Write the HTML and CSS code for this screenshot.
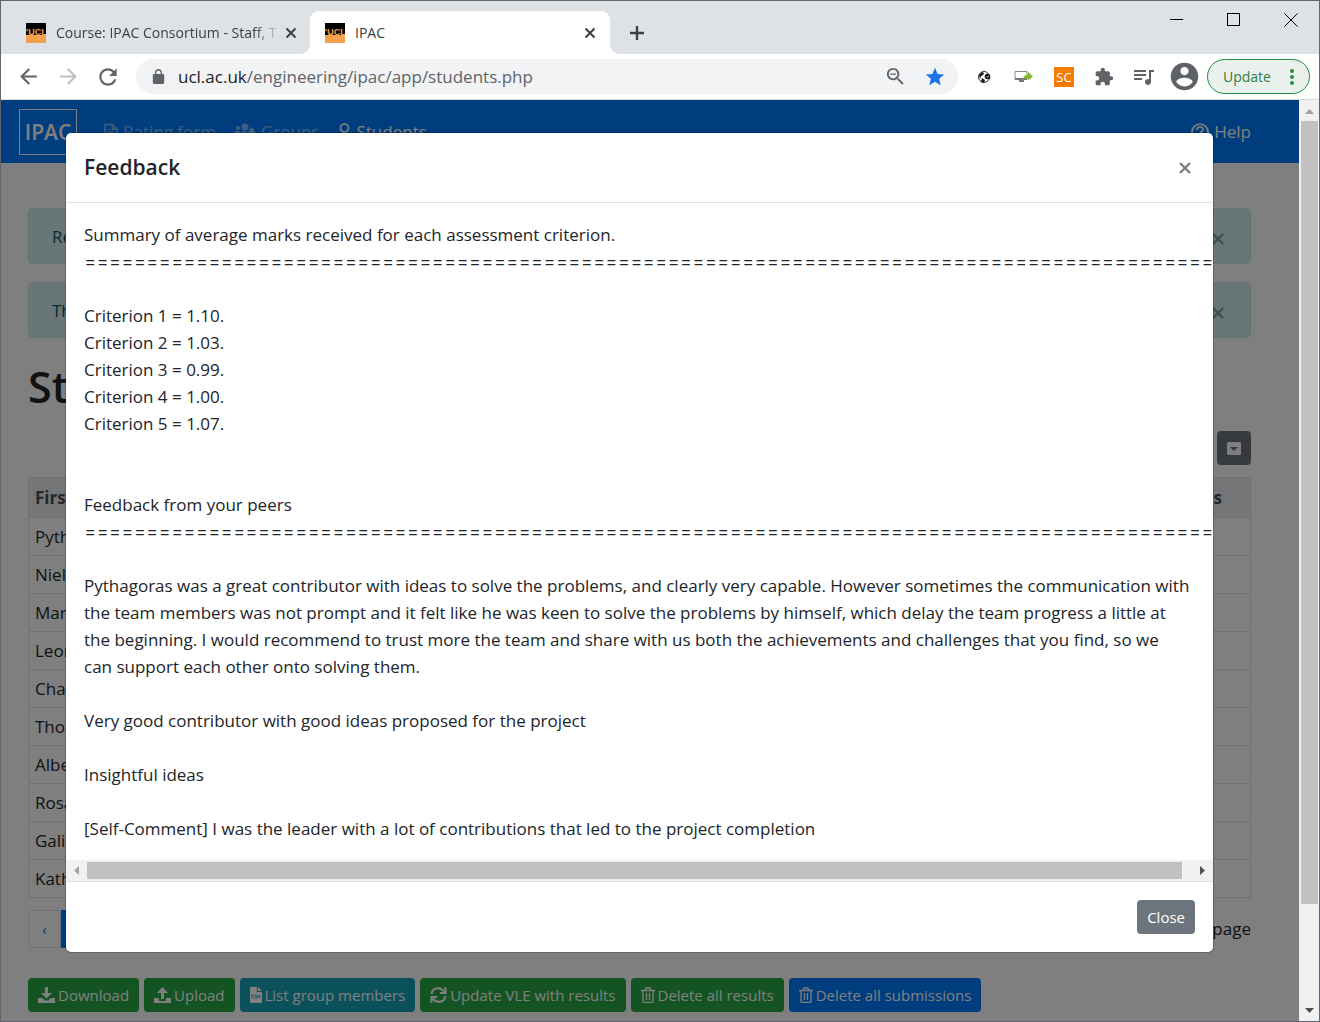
FILE: index.html
```html
<!DOCTYPE html>
<html lang="en">
<head>
	<meta charset="utf-8">
	<title>IPAC</title>
	<link rel="stylesheet" href="styles.css">
</head>
<body>
<div class="window">

	<header class="tabstrip">
		<div class="tab">
			<svg class="favicon" viewBox="0 0 20 20"><rect width="20" height="20" fill="#000"/><rect y="12" width="20" height="8" fill="#f3a14c"/><text x="0" y="12" class="favtext">'UCL</text></svg>
			<span class="tabtitle fade">Course: IPAC Consortium - Staff, T</span>
			<button class="tabclose" aria-label="Close tab"><svg width="12" height="12" viewBox="0 0 12 12"><path d="M1.500 1.500l9 9M10.500 1.500l-9 9" stroke="#3c4043" stroke-width="2"/></svg></button>
		</div>
		<div class="tab active">
			<svg class="favicon" viewBox="0 0 20 20"><rect width="20" height="20" fill="#000"/><rect y="12" width="20" height="8" fill="#f3a14c"/><text x="0" y="12" class="favtext">'UCL</text></svg>
			<span class="tabtitle">IPAC</span>
			<button class="tabclose" aria-label="Close tab"><svg width="12" height="12" viewBox="0 0 12 12"><path d="M1.500 1.500l9 9M10.500 1.500l-9 9" stroke="#3c4043" stroke-width="2"/></svg></button>
		</div>
		<button class="newtab" aria-label="New tab"><svg width="16" height="16" viewBox="0 0 16 16"><path d="M8 1v14M1 8h14" stroke="#3c4043" stroke-width="2.400"/></svg></button>
		<div class="winbuttons">
			<button aria-label="Minimise"><svg width="14" height="14"><path d="M0 6.500h13" stroke="#000"/></svg></button>
			<button aria-label="Maximise"><svg width="14" height="14"><rect x=".5" y=".5" width="12" height="12" fill="none" stroke="#000"/></svg></button>
			<button aria-label="Close window"><svg width="14" height="14"><path d="M.5 .5l13 13M13.500 .5l-13 13" stroke="#000"/></svg></button>
		</div>
	</header>

	<div class="toolbar">
		<button class="tool" aria-label="Back"><svg width="25" height="25" viewBox="0 0 24 24"><path fill="#5f6368" d="M20 11H7.830l5.590-5.590L12 4l-8 8 8 8 1.410-1.410L7.830 13H20v-2z"/></svg></button>
		<button class="tool" aria-label="Forward"><svg width="25" height="25" viewBox="0 0 24 24"><path fill="#bdc1c6" d="M4 11h12.170l-5.590-5.590L12 4l8 8-8 8-1.410-1.410L16.170 13H4v-2z"/></svg></button>
		<button class="tool" aria-label="Reload"><svg width="26" height="26" viewBox="0 0 24 24"><path fill="#5f6368" d="M17.650 6.350C16.200 4.900 14.210 4 12 4c-4.420 0-7.990 3.580-7.990 8s3.570 8 7.990 8c3.730 0 6.840-2.550 7.730-6h-2.080c-.82 2.330-3.040 4-5.650 4-3.310 0-6-2.690-6-6s2.690-6 6-6c1.660 0 3.140.69 4.220 1.780L13 11h7V4l-2.350 2.350z"/></svg></button>
		<div class="omnibox">
			<svg width="15" height="15" viewBox="3 1 18 21"><path fill="#5f6368" d="M18 8h-1V6c0-2.760-2.240-5-5-5S7 3.240 7 6v2H6c-1.100 0-2 .9-2 2v10c0 1.100.9 2 2 2h12c1.100 0 2-.9 2-2V10c0-1.100-.9-2-2-2zM9 6c0-1.660 1.340-3 3-3s3 1.340 3 3v2H9V6z"/></svg>
			<label class="host" for="url">ucl.ac.uk</label>
			<input id="url" type="text" value="/engineering/ipac/app/students.php">
			<button class="tool" aria-label="Zoom"><svg width="23" height="23" viewBox="0 0 24 24"><path fill="#5f6368" d="M15.500 14h-.79l-.28-.27C15.410 12.590 16 11.110 16 9.500 16 5.910 13.090 3 9.500 3S3 5.910 3 9.500 5.910 16 9.500 16c1.610 0 3.090-.59 4.230-1.570l.27.28v.79l5 4.990L20.490 19l-4.990-5zm-6 0C7.010 14 5 11.990 5 9.500S7.010 5 9.500 5 14 7.010 14 9.500 11.990 14 9.500 14zM6.500 8.800h6v1.400h-6z"/></svg></button>
			<button class="tool" aria-label="Bookmark"><svg width="22" height="22" viewBox="0 0 24 24"><path fill="#1a73e8" d="M12 17.270L18.180 21l-1.640-7.030L22 9.240l-7.190-.61L12 2 9.190 8.630 2 9.240l5.460 4.730L5.820 21z"/></svg></button>
		</div>
		<div class="extensions">
			<button class="tool" aria-label="Cookies"><svg width="14" height="14" viewBox="0 0 14 14"><circle cx="7" cy="7" r="5.500" fill="#fff" stroke="#333"/><path d="M2 5l3-3 2 1-1 2-2 1-1 3zM5 8l3 2-1 3-3-1z" fill="#111"/><circle cx="10.500" cy="6.500" r="2.800" fill="#111"/><path d="M9.500 6.500l1 1 1.500-2" fill="none" stroke="#fff" stroke-width=".8"/></svg></button>
			<button class="tool" aria-label="Share screen"><svg width="20" height="16" viewBox="0 0 20 16"><path d="M1 2.500h12v8H1z" fill="#fff" stroke="#888"/><path d="M1 9h12v2H1zM5 11h5v2H5z" fill="#777"/><path d="M9 12c0-5 2-6 5-6V3l5 4.500-5 4V9c-2 0-4 0-5 3z" fill="#7dbb2a"/></svg></button>
			<button class="tool" aria-label="SC"><span class="sc">SC</span></button>
			<button class="tool" aria-label="Extensions"><svg width="20" height="20" viewBox="0 0 24 24"><path fill="#5f6368" d="M20.500 11H19V7c0-1.100-.9-2-2-2h-4V3.500C13 2.120 11.880 1 10.500 1S8 2.120 8 3.500V5H4c-1.100 0-1.990.9-1.990 2v3.800H3.500c1.490 0 2.700 1.210 2.700 2.700s-1.210 2.700-2.700 2.700H2V20c0 1.100.9 2 2 2h3.800v-1.500c0-1.490 1.210-2.700 2.700-2.700 1.490 0 2.700 1.210 2.700 2.700V22H17c1.100 0 2-.9 2-2v-4h1.500c1.380 0 2.500-1.120 2.500-2.500S21.880 11 20.500 11z"/></svg></button>
			<button class="tool" aria-label="Media"><svg width="24" height="24" viewBox="0 0 24 24"><path fill="#5f6368" d="M14 5H2v2h12V5zm0 4H2v2h12V9zM2 15h8v-2H2v2zM17 5v9.180c-.31-.11-.65-.18-1-.18-1.660 0-3 1.340-3 3s1.340 3 3 3 3-1.340 3-3V7h3V5h-5z"/></svg></button>
			<button class="tool" aria-label="Profile"><svg width="33" height="33" viewBox="0 0 24 24"><path fill="#5f6368" d="M12 2C6.480 2 2 6.480 2 12s4.480 10 10 10 10-4.480 10-10S17.520 2 12 2zm0 3c1.660 0 3 1.340 3 3s-1.340 3-3 3-3-1.340-3-3 1.340-3 3-3zm0 14.200c-2.500 0-4.710-1.280-6-3.220.03-1.990 4-3.080 6-3.080 1.990 0 5.970 1.090 6 3.080-1.290 1.940-3.500 3.220-6 3.220z"/></svg></button>
		</div>
		<button class="update">Update <svg width="4" height="16" viewBox="0 0 4 16"><g fill="#1e8e3e"><circle cx="2" cy="2" r="2"/><circle cx="2" cy="8" r="2"/><circle cx="2" cy="14" r="2"/></g></svg></button>
	</div>

	<div class="viewport">
		<div class="page">
			<nav class="navbar">
				<a class="brand" href="#">IPAC</a>
				<a class="navlink" href="#"><svg width="14" height="18" viewBox="0 0 15 18" fill="none" stroke="currentColor" stroke-width="1.500"><path d="M1 1h8l5 5v11H1zM9 1v5h5M4 9.500h7M4 12.500h7M4 6.500h2"/></svg>Rating form</a>
				<a class="navlink" href="#"><svg width="21" height="18" viewBox="0 0 21 18" fill="currentColor"><circle cx="3" cy="5" r="2"/><circle cx="10" cy="4" r="3.500"/><circle cx="17" cy="6" r="1.500"/><path d="M0 8h5l-2 4H0zM4 15c0-5 2-7 6-7l3 3v4zM12 9l2-1 1-2h3l1 2 2 1-1 3 1 2-3 1-1 2h-2l-2-3z"/></svg>Groups</a>
				<a class="navlink current" href="#"><svg width="13" height="18" viewBox="0 0 12 18" fill="none" stroke="currentColor" stroke-width="1.700"><circle cx="6" cy="5" r="4"/><path d="M1 17v-3c0-4 10-4 10 0v3z"/></svg>Students</a>
				<a class="navlink current help" href="#"><svg width="18" height="18" viewBox="0 0 18 18" fill="none" stroke="currentColor" stroke-width="1.700"><circle cx="9" cy="9" r="8"/><path d="M6 7c0-4 6-4 6-.5C12 9 9 8.500 9 11M9 12.500v2"/></svg>Help</a>
			</nav>

			<main class="content">
				<div class="alert"><span>Results</span><button aria-label="Dismiss"><svg width="12" height="12" viewBox="0 0 12 12"><path d="M1 1l10 10M11 1L1 11" stroke="currentColor" stroke-width="2.200"/></svg></button></div>
				<div class="alert"><span>The</span><button aria-label="Dismiss"><svg width="12" height="12" viewBox="0 0 12 12"><path d="M1 1l10 10M11 1L1 11" stroke="currentColor" stroke-width="2.200"/></svg></button></div>

				<h1>Students</h1>

				<div class="tabletools">
					<button class="btn secondary" aria-label="Columns"><svg width="14" height="13" viewBox="0 0 14 13"><rect width="14" height="13" rx="1.500" fill="currentColor"/><path d="M3 5h8l-4 4z" fill="#6c757d"/></svg></button>
				</div>

				<table>
					<thead>
						<tr><th>First name</th><th class="last">Actions</th></tr>
					</thead>
					<tbody>
						<tr><td>Pythagoras</td><td></td></tr>
						<tr><td>Niels</td><td></td></tr>
						<tr><td>Marie</td><td></td></tr>
						<tr><td>Leonardo</td><td></td></tr>
						<tr><td>Charles</td><td></td></tr>
						<tr><td>Thomas</td><td></td></tr>
						<tr><td>Albert</td><td></td></tr>
						<tr><td>Rosalind</td><td></td></tr>
						<tr><td>Galileo</td><td></td></tr>
						<tr><td>Katherine</td><td></td></tr>
					</tbody>
				</table>

				<div class="paging">
					<div class="pages"><a href="#">‹</a><a class="on" href="#">1</a></div>
					<span>rows per page</span>
				</div>

				<div class="actions">
					<button class="btn success"><svg width="17" height="16" viewBox="0 0 17 16"><path fill="currentColor" d="M7 0h3v6h4l-5.500 5.500L3 6h4zM0 11h4l3 2.500h3l3-2.500h4v5H0z"/></svg>Download</button>
					<button class="btn success"><svg width="17" height="16" viewBox="0 0 17 16"><path fill="currentColor" d="M7 12V6H3l5.500-6L14 6h-4v6zM0 11h5v3h7v-3h5v5H0z"/></svg>Upload</button>
					<button class="btn info"><svg width="12" height="16" viewBox="0 0 12 16"><path fill="currentColor" d="M0 0h7v5h5v11H0zM8 0l4 4H8z"/><path d="M4 8H2v3h2M7 8H5.500v1.500H7V11H5M8 8l1 3 1-3" fill="none" stroke="#17a2b8" stroke-width=".8"/></svg>List group members</button>
					<button class="btn success"><svg width="17" height="16" viewBox="0 0 17 16" fill="none" stroke="currentColor" stroke-width="2"><path d="M1.500 7C2.500 0 11 -.5 14 4.500M15.500 0v6H10M15.500 9C14.500 16 6 16.500 3 11.500M1.500 16v-6H7"/></svg>Update VLE with results</button>
					<button class="btn success"><svg width="14" height="16" viewBox="0 0 14 16" fill="none" stroke="currentColor" stroke-width="1.300"><path d="M0 3.500h14M4 3.500L5 1h4l1 2.500M2 3.500v11q0 .8.800.8h8.400q.8 0 .8-.8v-11M5.500 6v7M8.500 6v7"/></svg>Delete all results</button>
					<button class="btn primary"><svg width="14" height="16" viewBox="0 0 14 16" fill="none" stroke="currentColor" stroke-width="1.300"><path d="M0 3.500h14M4 3.500L5 1h4l1 2.500M2 3.500v11q0 .8.800.8h8.400q.8 0 .8-.8v-11M5.500 6v7M8.500 6v7"/></svg>Delete all submissions</button>
				</div>
			</main>

			<div class="backdrop"></div>

			<div class="modal" role="dialog" aria-labelledby="modaltitle">
				<div class="modal-header">
					<h2 id="modaltitle">Feedback</h2>
					<button aria-label="Close feedback"><svg width="14" height="14" viewBox="0 0 14 14"><path d="M2 2l10 10M12 2L2 12" stroke="#7f7f7f" stroke-width="2.400"/></svg></button>
				</div>
				<div class="modal-body">
					Summary of average marks received for each assessment criterion.<br>
					<span class="rule">===========================================================================================</span><br>
					<br>
					Criterion 1 = 1.10.<br>
					Criterion 2 = 1.03.<br>
					Criterion 3 = 0.99.<br>
					Criterion 4 = 1.00.<br>
					Criterion 5 = 1.07.<br>
					<br>
					<br>
					Feedback from your peers<br>
					<span class="rule">===========================================================================================</span><br>
					<br>
					Pythagoras was a great contributor with ideas to solve the problems, and clearly very capable. However sometimes the communication with<br>
					the team members was not prompt and it felt like he was keen to solve the problems by himself, which delay the team progress a little at<br>
					the beginning. I would recommend to trust more the team and share with us both the achievements and challenges that you find, so we<br>
					can support each other onto solving them.<br>
					<br>
					Very good contributor with good ideas proposed for the project<br>
					<br>
					Insightful ideas<br>
					<br>
					[Self-Comment] I was the leader with a lot of contributions that led to the project completion
				</div>
				<div class="hscroll">
					<svg width="21" height="21" viewBox="0 0 21 21"><path d="M13 6v9l-5-4.500z" fill="#a3a3a3"/></svg>
					<div class="thumb"></div>
					<svg width="21" height="21" viewBox="0 0 21 21"><path d="M8 6v9l5-4.500z" fill="#505050"/></svg>
				</div>
				<div class="modal-footer">
					<button class="btn secondary">Close</button>
				</div>
			</div>
		</div>

		<div class="vscroll">
			<svg width="20" height="21" viewBox="0 0 20 21"><path d="M6 14h9l-4.500-5z" fill="#a3a3a3"/></svg>
			<div class="thumb"></div>
			<svg width="20" height="21" viewBox="0 0 20 21"><path d="M6 8h9l-4.500 5z" fill="#505050"/></svg>
		</div>
	</div>
</div>
</body>
</html>
```
FILE: styles.css
```css
* {
	box-sizing: border-box;
}
body {
	margin: 0;
	font-family: "Open Sans", "Noto Sans", sans-serif;
	font-size: 17px;
	line-height: 27px;
	color: #212529;
}
button {
	margin: 0;
	padding: 0;
	border: 0;
	background: none;
	font-family: inherit;
	color: inherit;
}
a {
	text-decoration: none;
}
svg {
	display: block;
	flex: none;
}
.window {
	display: flex;
	flex-direction: column;
	height: 100vh;
	border: 1px solid #63666d;
	overflow: hidden;
}

/* browser tabs */
.tabstrip {
	display: flex;
	height: 53px;
	padding-top: 10px;
	background: #dee1e6;
}
.tab {
	display: flex;
	align-items: center;
	width: 300px;
	padding: 0 14px 0 15px;
	font-size: 14px;
	color: #3c4043;
}
.tab:first-child {
	width: 309px;
	padding: 0 13px 0 25px;
}
.tab.active {
	position: relative;
	background: #fff;
	border-radius: 9px 9px 0 0;
}
.tab.active::before,
.tab.active::after {
	content: "";
	position: absolute;
	bottom: 0;
	width: 10px;
	height: 10px;
}
.tab.active::before {
	left: -10px;
	background: radial-gradient(circle at 0 0, #dee1e6 10px, #fff 10px);
}
.tab.active::after {
	right: -10px;
	background: radial-gradient(circle at 100% 0, #dee1e6 10px, #fff 10px);
}
.favicon {
	width: 20px;
	height: 20px;
	margin-right: 10px;
}
.favtext {
	font-family: "Liberation Sans", sans-serif;
	font-size: 9px;
	font-weight: 700;
	fill: #f3a14c;
}
.tabtitle {
	flex: 1;
	white-space: nowrap;
	overflow: hidden;
}
.fade {
	margin-right: 4px;
	-webkit-mask-image: linear-gradient(90deg, #000 88%, transparent);
	mask-image: linear-gradient(90deg, #000 88%, transparent);
}
.newtab {
	width: 54px;
}
.newtab svg {
	margin: 0 auto;
}
.winbuttons {
	display: flex;
	gap: 43px;
	align-items: flex-start;
	margin-left: auto;
	padding: 2px 21px 0 0;
}

/* browser toolbar */
.toolbar {
	display: flex;
	align-items: center;
	height: 46px;
	padding: 0 9px 0 7px;
	background: #fff;
	border-bottom: 1px solid #d5d8dc;
}
.tool {
	display: flex;
	align-items: center;
	justify-content: center;
	width: 40px;
	height: 35px;
}
.omnibox {
	display: flex;
	flex: 1;
	align-items: center;
	height: 35px;
	margin: 0 6px 0 8px;
	padding: 0 3px 0 15px;
	border-radius: 18px;
	background: #f1f3f4;
}
.host {
	padding-left: 12px;
	color: #202124;
}
.omnibox input {
	flex: 1;
	padding: 0;
	border: 0;
	outline: 0;
	background: none;
	font: inherit;
	color: #5f6368;
}
.extensions {
	display: flex;
}
.sc {
	width: 20px;
	background: #f57c00;
	color: #fff;
	font-size: 13px;
	line-height: 20px;
}
.update {
	display: flex;
	align-items: center;
	justify-content: space-between;
	width: 103px;
	height: 35px;
	margin-left: 3px;
	padding: 0 15px;
	border: 1px solid #1e8e3e;
	border-radius: 18px;
	background: #eaf1ed;
	color: #2e7d46;
	font-size: 14px;
}

/* page */
.viewport {
	display: flex;
	flex: 1;
	min-height: 0;
}
.page {
	position: relative;
	flex: 1;
	overflow: hidden;
	background: #fff;
}
.navbar {
	display: flex;
	align-items: center;
	height: 63px;
	padding: 0 48px 0 18px;
	background: #007bff;
}
.brand {
	width: 58px;
	margin-right: 27px;
	padding: 9px 0 8px;
	border: 1px solid #fff;
	color: #fff;
	font-size: 21px;
	font-weight: 600;
	text-align: center;
}
.navlink {
	display: flex;
	align-items: center;
	gap: 5px;
	margin-right: 19px;
	color: rgba(255,255,255,.5);
}
.navlink.current {
	color: #fff;
}
.navlink.help {
	margin: 0 0 0 auto;
}
.content {
	padding: 45px 48px 0 27px;
}
.alert {
	display: flex;
	align-items: center;
	justify-content: space-between;
	height: 56px;
	margin-bottom: 18px;
	padding: 0 26px 0 23px;
	border: 1px solid #bee5eb;
	border-radius: 5px;
	background: #d1ecf1;
	color: #0c5460;
}
.alert button {
	padding-top: 6px;
	opacity: .5;
}
h1 {
	margin: 22px 0 17px;
	font-size: 43px;
	font-weight: 600;
	line-height: 54px;
}
.tabletools {
	display: flex;
	justify-content: flex-end;
	margin-bottom: 12px;
}
.btn {
	display: flex;
	align-items: center;
	gap: 3px;
	height: 34px;
	padding: 0 10px;
	border-radius: 4px;
	color: #fff;
	font-size: 15px;
	white-space: nowrap;
}
.secondary {
	background: #6c757d;
}
.success {
	background: #28a745;
}
.info {
	background: #17a2b8;
}
.primary {
	background: #007bff;
}
table {
	width: 100%;
	border-collapse: collapse;
}
th, td {
	height: 38px;
	padding: 0 6px;
	border: 1px solid #dee2e6;
	text-align: left;
}
th {
	height: 40px;
	background: #e9ecef;
	color: #495057;
}
th.last {
	padding-right: 28px;
	text-align: right;
}
.paging {
	display: flex;
	justify-content: space-between;
	margin: 12px 0 30px;
	line-height: 38px;
}
.pages {
	display: flex;
	text-align: center;
}
.pages a {
	width: 33px;
	border: 1px solid #dee2e6;
	border-radius: 4px 0 0 4px;
	font-size: 15px;
	line-height: 36px;
	color: #007bff;
}
.pages .on {
	border-color: #007bff;
	border-radius: 0;
	background: #007bff;
	color: #fff;
}
.actions {
	display: flex;
	gap: 5px;
}

/* modal */
.backdrop {
	position: absolute;
	inset: 0;
	background: rgba(0,0,0,.5);
}
.modal {
	position: absolute;
	top: 33px;
	left: 65px;
	right: 86px;
	border-radius: 5px;
	background: #fff;
	box-shadow: 0 0 0 1px rgba(0,0,0,.2);
	overflow: hidden;
}
.modal-header {
	display: flex;
	align-items: center;
	justify-content: space-between;
	padding: 18px 21px 18px 18px;
	border-bottom: 1px solid #dee2e6;
}
h2 {
	margin: 0;
	font-size: 21px;
	font-weight: 600;
	line-height: 33px;
}
.modal-body {
	padding: 18px;
	overflow: hidden;
	white-space: nowrap;
}
.rule {
	font-family: Inter, sans-serif;
	font-size: 19px;
	font-weight: 300;
	line-height: 20px;
}
.hscroll {
	display: flex;
	align-items: center;
	height: 21px;
	background: #f1f1f1;
}
.hscroll .thumb {
	flex: 1;
	height: 17px;
	margin-right: 10px;
	background: #c1c1c1;
}
.modal-footer {
	display: flex;
	justify-content: flex-end;
	padding: 18px;
	border-top: 1px solid #dee2e6;
}
.vscroll {
	display: flex;
	flex-direction: column;
	width: 20px;
	background: #f1f1f1;
}
.vscroll .thumb {
	width: 17px;
	height: 85%;
	margin: 0 1px 0 2px;
	background: #c1c1c1;
}
.vscroll .thumb + svg {
	margin-top: auto;
}
```
